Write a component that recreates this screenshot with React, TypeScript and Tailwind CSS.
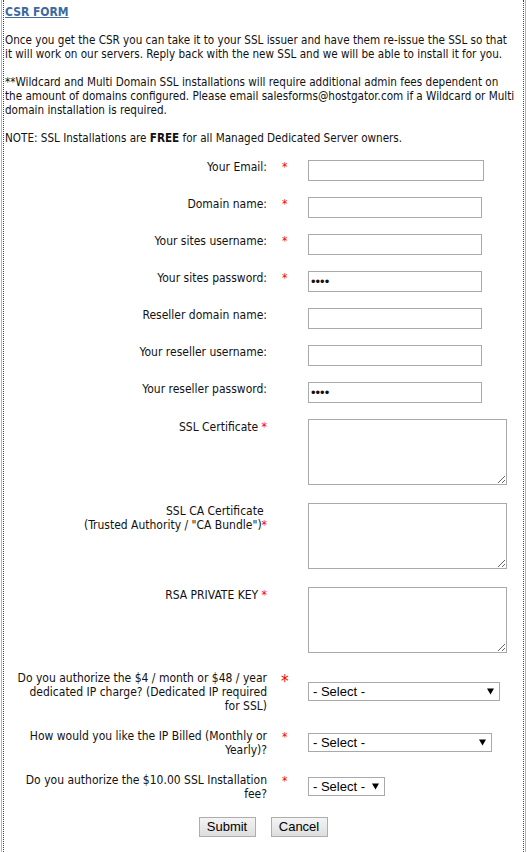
import React from "react";

const font = "font-['DejaVu_Sans_Condensed','DejaVu_Sans',sans-serif] [font-stretch:condensed]";
const arial = "font-['Liberation_Sans',Arial,sans-serif] [font-stretch:normal]";

function Star({ big = false }: { big?: boolean }) {
  return big ? (
    <span className="text-[#ff0000] text-[17px] leading-[14px]">*</span>
  ) : (
    <span className="text-[#ff0000]">*</span>
  );
}

function InputRow({ label, req, w, pw }: { label: string; req?: boolean; w: number; pw?: boolean }) {
  return (
    <div className="grid grid-cols-[262px_41px_1fr] items-start">
      <div className="text-right">{label}</div>
      <div className="pl-[15px]">{req ? <Star /> : null}</div>
      <div>
        <input
          type={pw ? "password" : "text"}
          defaultValue={pw ? "abcd" : ""}
          style={{ width: w }}
          className={`h-[21px] border border-[#a9a9a9] bg-white px-[2px] text-[13px] outline-none ${arial}`}
        />
      </div>
    </div>
  );
}

function AreaRow({ children }: { children: React.ReactNode }) {
  return (
    <div className="grid grid-cols-[262px_41px_1fr] items-start">
      <div className="text-right pt-[1px]">{children}</div>
      <div />
      <div>
        <textarea className="block h-[66px] w-[199px] border border-[#a9a9a9] bg-white outline-none" />
      </div>
    </div>
  );
}

function SelectRow({ children, w, big }: { children: React.ReactNode; w: number; big?: boolean }) {
  return (
    <div className="grid grid-cols-[262px_41px_1fr] items-start">
      <div className="text-right">{children}</div>
      <div className={big ? "pl-[14px] pt-[3px]" : "pl-[15px] pt-[1px]"}>
        <Star big={big} />
      </div>
      <div className="self-center -mt-[2px]">
        <div className="relative" style={{ width: w }}>
          <select
            className={`block h-[19px] w-full appearance-none border border-[#a9a9a9] bg-white pl-[4px] text-[13px] leading-[17px] text-black outline-none ${arial}`}
          >
            <option>- Select -</option>
          </select>
          <svg
            className="pointer-events-none absolute right-[6px] top-[6px]"
            width="7"
            height="7"
            viewBox="0 0 7 7"
          >
            <path d="M0 0.5 L7 0.5 L3.5 6.5 Z" fill="#000" />
          </svg>
        </div>
      </div>
    </div>
  );
}

export default function App() {
  return (
    <div className="min-h-[852px] bg-white">
      <div className="mx-[1px] min-h-[852px] border-x border-[#b5b5b5] px-[1px]">
        <div
          className={`min-h-[852px] border-x border-dotted border-[#e00000] pl-[1px] pt-[5px] text-[12px] leading-[14px] text-[#111] ${font}`}
        >
          <div className="whitespace-nowrap text-[11.6px]">
            <a className="font-bold text-[#3a6aa0] underline text-[12px]">CSR FORM</a>
            <br />
            <br />
            Once you get the CSR you can take it to your SSL issuer and have them re-issue the SSL so that
            <br />
            it will work on our servers. Reply back with the new SSL and we will be able to install it for you.
            <br />
            <br />
            **Wildcard and Multi Domain SSL installations will require additional admin fees dependent on
            <br />
            the amount of domains configured. Please email salesforms@hostgator.com if a Wildcard or Multi
            <br />
            domain installation is required.
            <br />
            <br />
            NOTE: SSL Installations are <b>FREE</b> for all Managed Dedicated Server owners.
          </div>

          <div className="mt-[15px] flex flex-col gap-[16px] whitespace-nowrap">
            <InputRow label="Your Email:" req w={176} />
            <InputRow label="Domain name:" req w={174} />
            <InputRow label="Your sites username:" req w={174} />
            <InputRow label="Your sites password:" req w={174} pw />
            <InputRow label="Reseller domain name:" w={174} />
            <InputRow label="Your reseller username:" w={174} />
            <InputRow label="Your reseller password:" w={174} pw />
          </div>

          <div className="mt-[16px] flex flex-col gap-[18px] whitespace-nowrap">
            <AreaRow>
              SSL Certificate <Star />
            </AreaRow>
            <AreaRow>
              SSL CA Certificate&nbsp;
              <br />
              (Trusted Authority / "CA Bundle")<Star />
            </AreaRow>
            <AreaRow>
              RSA PRIVATE KEY <Star />
            </AreaRow>
          </div>

          <div className="mt-[18px] flex flex-col gap-[16px] whitespace-nowrap">
            <SelectRow w={192} big>
              Do you authorize the $4 / month or $48 / year
              <br />
              dedicated IP charge? (Dedicated IP required
              <br />
              for SSL)
            </SelectRow>
            <SelectRow w={184}>
              How would you like the IP Billed (Monthly or
              <br />
              Yearly)?
            </SelectRow>
            <SelectRow w={77}>
              Do you authorize the $10.00 SSL Installation
              <br />
              fee?
            </SelectRow>
          </div>

          <div className={`mt-[16px] flex justify-center gap-[15px] pr-[2px] text-[13px] ${arial}`}>
            <button className="h-[20px] w-[57px] border border-[#adadad] bg-gradient-to-b from-[#f4f4f4] to-[#dedede] leading-[18px] text-black">
              Submit
            </button>
            <button className="h-[20px] w-[57px] border border-[#adadad] bg-gradient-to-b from-[#f4f4f4] to-[#dedede] leading-[18px] text-black">
              Cancel
            </button>
          </div>
        </div>
      </div>
    </div>
  );
}
